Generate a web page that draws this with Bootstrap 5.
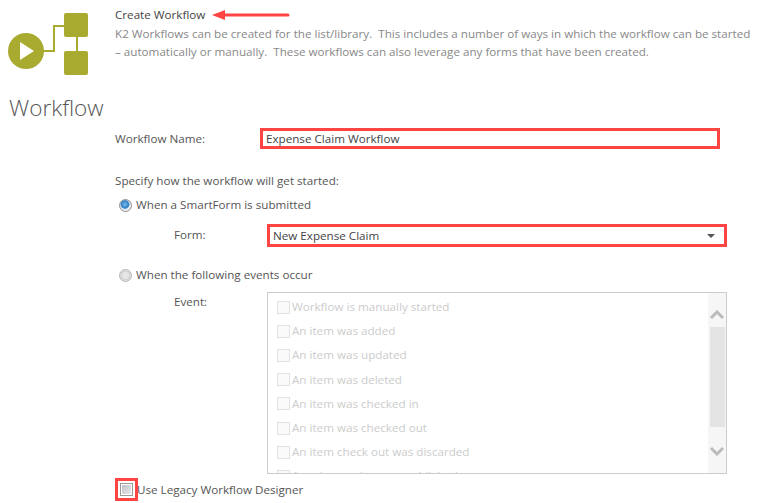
<!DOCTYPE html>
<html lang="en"><head><meta charset="utf-8"><title>Create Workflow</title>
<link href="https://cdn.jsdelivr.net/npm/bootstrap@5.3.0/dist/css/bootstrap.min.css" rel="stylesheet">
<style>
html,body{height:503px;overflow:hidden}
body{font-family:"Open Sans","Noto Sans",sans-serif;font-size:11.65px;line-height:16px;color:#555;background:#fff}
.pagewrap{width:760px;height:503px;position:relative;overflow:hidden}
.headrow{height:92px}
.logobox{width:115px;padding:12px 0 0 8px}
.headtext{padding-top:7px}
.titleline{height:16px;color:#444}
.arrowmark{margin-left:7px}
.desc{color:#888;margin-top:2px;line-height:17.6px;width:640px}
.pagehead{font-size:22.6px;line-height:32px;color:#555;font-weight:300;margin:0 0 0 9px;height:36px}
.formarea{margin-left:115px}
.namerow{height:21px}
.namelabel{width:145px}
.redtext{width:460px;height:21px;border:3px solid #ff4444;padding:0 3px;line-height:15px;color:#444}
.specify{margin-top:24px}
.radrow{margin-top:8px;margin-left:4px;height:16px}
.radrow2{margin-top:20px}
.fakeradio{width:13px;height:13px;border-radius:50%;border:1px solid #b4b4b4;background:radial-gradient(circle,#e6e6e6 0 40%,#cfcfcf 55%,#f6f6f6 80%);margin-right:4px;flex:none}
.fakeradio.sel{background:radial-gradient(circle at 45% 40%,#7dbcec 0,#2f7fc4 42%,#dfe6ec 54%,#f2f2f2 75%);border-color:#909090}
.formrow{margin-top:11px;margin-left:59px;height:23px}
.smalllabel{width:93px}
.formlabel{padding-bottom:2px}
.eventlabel{padding-top:2px}
.redselect{width:460px;height:23px;border:3px solid #ff4444;padding:0 9px 0 3px;color:#444}
.caret1{width:0;height:0;border-left:4px solid transparent;border-right:4px solid transparent;border-top:4px solid #555}
.eventrow{margin-top:9px;margin-left:59px}
.listframe{width:460px;height:182px;border:1px solid #ccc;overflow:hidden}
.listitems{padding:2px 0 0 9px;color:#ccc}
.listline{height:24.2px;align-items:center}
.fakecheck{width:13px;height:13px;border:1px solid #e2e2e2;margin-right:2px;flex:none;background:#fafafa}
.scrolltrack{width:18px;background:#f6f6f6;padding:0 1px}
.thumbbar{height:100px;background:#e4e4e4;width:15px;margin:0 auto}
.arrowcell{height:34px}
.arrowtop{padding-top:17px}
.arrowbot{padding-top:19px}
.legacyrow{margin-top:4px;height:23px}
.redsq{width:23px;height:23px;border:3px solid #ff4444;flex:none;padding:2px}
.innercheck{display:block;width:13px;height:13px;border:1px solid #999;box-shadow:inset 0 0 0 1px #fff;background:linear-gradient(135deg,#b8bdc4,#eceef0)}
.legacytext{margin-left:-1px}
</style></head>
<body>
<div class="pagewrap">
  <div class="d-flex headrow">
    <div class="logobox">
      <svg width="82" height="64" viewBox="0 0 82 64">
        <path d="M35 39H46V14H58M69 25V42" fill="none" stroke="#a9ab31" stroke-width="2"/>
        <circle cx="18" cy="39" r="18" fill="#a9ab31"/>
        <path d="M12 30 L26 39 L12 48Z" fill="#fff"/>
        <rect x="56" y="1" width="24" height="24" rx="2" fill="#a9ab31"/>
        <rect x="56" y="39" width="24" height="24" rx="2" fill="#a9ab31"/>
      </svg>
    </div>
    <div class="headtext">
      <div class="titleline d-flex align-items-center">Create Workflow
        <svg class="arrowmark" width="78" height="10" viewBox="0 0 78 10"><path d="M0 5 L13 0V3.5H76a1.5 1.5 0 0 1 0 3H13V10Z" fill="#f44"/></svg>
      </div>
      <div class="desc">K2 Workflows can be created for the list/library.&nbsp; This includes a number of ways in which the workflow can be started – automatically or manually.&nbsp; These workflows can also leverage any forms that have been created.</div>
    </div>
  </div>
  <h1 class="pagehead">Workflow</h1>
  <div class="formarea">
    <div class="d-flex align-items-center namerow">
      <div class="namelabel">Workflow Name:</div>
      <div class="redtext">Expense Claim Workflow</div>
    </div>
    <div class="specify">Specify how the workflow will get started:</div>
    <div class="d-flex align-items-center radrow"><span class="fakeradio sel"></span>When a SmartForm is submitted</div>
    <div class="d-flex align-items-center formrow">
      <div class="smalllabel formlabel">Form:</div>
      <div class="redselect d-flex align-items-center justify-content-between"><span>New Expense Claim</span><span class="caret1"></span></div>
    </div>
    <div class="d-flex align-items-center radrow radrow2"><span class="fakeradio"></span>When the following events occur</div>
    <div class="d-flex eventrow">
      <div class="smalllabel eventlabel">Event:</div>
      <div class="listframe d-flex">
        <div class="listitems flex-grow-1">
          <div class="d-flex listline"><span class="fakecheck"></span>Workflow is manually started</div>
          <div class="d-flex listline"><span class="fakecheck"></span>An item was added</div>
          <div class="d-flex listline"><span class="fakecheck"></span>An item was updated</div>
          <div class="d-flex listline"><span class="fakecheck"></span>An item was deleted</div>
          <div class="d-flex listline"><span class="fakecheck"></span>An item was checked in</div>
          <div class="d-flex listline"><span class="fakecheck"></span>An item was checked out</div>
          <div class="d-flex listline"><span class="fakecheck"></span>An item check out was discarded</div>
          <div class="d-flex listline"><span class="fakecheck"></span>A major version was published</div>
        </div>
        <div class="scrolltrack">
          <div class="arrowcell arrowtop"><svg class="d-block" width="16" height="10" viewBox="0 0 16 10"><path d="M2 8 L8 2 L14 8" fill="none" stroke="#bbb" stroke-width="3"/></svg></div>
          <div class="thumbbar"></div>
          <div class="arrowcell arrowbot"><svg class="d-block" width="16" height="10" viewBox="0 0 16 10"><path d="M2 2 L8 8 L14 2" fill="none" stroke="#bbb" stroke-width="3"/></svg></div>
        </div>
      </div>
    </div>
    <div class="d-flex align-items-center legacyrow">
      <span class="redsq"><span class="innercheck"></span></span>
      <span class="legacytext">Use Legacy Workflow Designer</span>
    </div>
  </div>
</div>
<script src="https://cdn.jsdelivr.net/npm/bootstrap@5.3.0/dist/js/bootstrap.bundle.min.js"></script>
</body></html>
